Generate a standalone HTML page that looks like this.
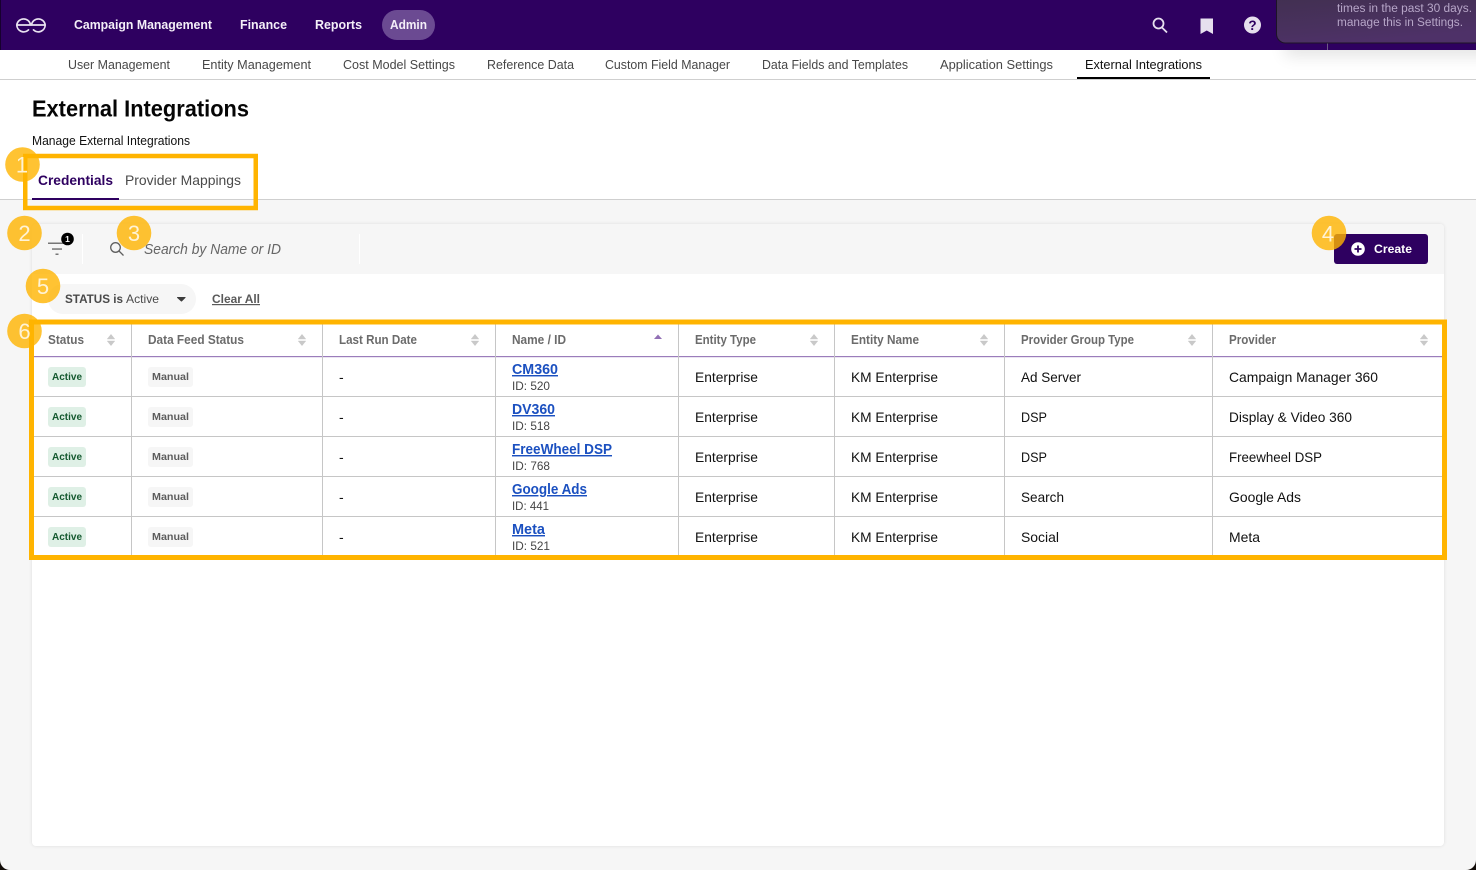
<!DOCTYPE html>
<html lang="en"><head><meta charset="utf-8"><title>External Integrations</title>
<style>
html,body{margin:0;padding:0;width:1476px;height:870px;overflow:hidden;background:#fff}
svg{display:block}
text{font-family:"Liberation Sans",sans-serif;white-space:pre}
.n{font-size:13px;font-weight:700;fill:#f4eff8}
.s{font-size:13px;fill:#474747}
.h{font-size:12.5px;font-weight:700;fill:#6b6b6b}
.c{font-size:14px;fill:#111}
.l{font-size:14.5px;font-weight:700;fill:#1b50c0;text-decoration:underline}
.i{font-size:12px;fill:#444}
.a{font-size:10.5px;font-weight:700;fill:#14592f}
.m{font-size:10.5px;font-weight:700;fill:#5c5c5c}
.b{font-size:22px;fill:#fff3d6;text-anchor:middle}
.si{fill:#c9c9c9}
</style></head><body>
<svg width="1476" height="870" viewBox="0 0 1476 870" xmlns="http://www.w3.org/2000/svg">
<defs>
<linearGradient id="pop" x1="0" y1="0" x2="0.35" y2="1"><stop offset="0" stop-color="#40304e"/><stop offset=".75" stop-color="#4a3160"/><stop offset="1" stop-color="#4e3168"/></linearGradient>
<filter id="blur" x="-20%" y="-100%" width="140%" height="300%"><feGaussianBlur stdDeviation="8"/></filter>
<symbol id="sort" viewBox="0 0 8 12"><path class="si" d="M4 0.300L7.800 5H.2zM4 11.700L.2 7H7.800z" stroke="#c9c9c9" stroke-width=".4" stroke-linejoin="round"/></symbol>
</defs>
<rect width="1476" height="870" fill="#fff"/>
<!-- notification shadow on page -->
<rect x="1285" y="36" width="215" height="20" fill="#000" opacity=".11" filter="url(#blur)"/>
<!-- top bar -->
<rect width="1476" height="50" fill="#2e0060"/>
<rect width="1" height="50" fill="#17002f"/>
<g fill="none" stroke="#e9e2f0" stroke-width="1.700" stroke-linecap="round">
<path d="M16.800 25H30.500A6.900 6.900 0 0 0 16.800 25A6.900 6.900 0 0 0 28.500 29.900"/>
<path d="M45.200 25H31.500A6.900 6.900 0 0 1 45.200 25A6.900 6.900 0 0 1 33.500 29.900"/>
</g>
<text class="n" x="74" y="29" textLength="138" lengthAdjust="spacingAndGlyphs">Campaign Management</text>
<text class="n" x="240" y="29" textLength="47" lengthAdjust="spacingAndGlyphs">Finance</text>
<text class="n" x="315" y="29" textLength="47" lengthAdjust="spacingAndGlyphs">Reports</text>
<rect x="382" y="10" width="53" height="30" rx="15" fill="#6b4a92"/>
<text class="n" x="390" y="29" textLength="37" lengthAdjust="spacingAndGlyphs">Admin</text>
<!-- right icons -->
<g fill="none" stroke="#e6dfee" stroke-width="1.800"><circle cx="1158.500" cy="23.500" r="5"/><path d="M1162 27.500L1167 32.500"/></g>
<path d="M1200.500 18.500h12.500v15.500l-6.250-3.500-6.250 3.500z" fill="#e6dfee"/>
<circle cx="1252.500" cy="25" r="8.500" fill="#e6dfee"/>
<text x="1252.500" y="30" font-size="13.500" font-weight="700" fill="#2e0060" text-anchor="middle">?</text>
<!-- sub nav -->
<text class="s" x="68" y="69" textLength="102" lengthAdjust="spacingAndGlyphs">User Management</text>
<text class="s" x="202" y="69" textLength="109" lengthAdjust="spacingAndGlyphs">Entity Management</text>
<text class="s" x="343" y="69" textLength="112" lengthAdjust="spacingAndGlyphs">Cost Model Settings</text>
<text class="s" x="487" y="69" textLength="87" lengthAdjust="spacingAndGlyphs">Reference Data</text>
<text class="s" x="605" y="69" textLength="125" lengthAdjust="spacingAndGlyphs">Custom Field Manager</text>
<text class="s" x="762" y="69" textLength="146" lengthAdjust="spacingAndGlyphs">Data Fields and Templates</text>
<text class="s" x="940" y="69" textLength="113" lengthAdjust="spacingAndGlyphs">Application Settings</text>
<text class="s" x="1085" y="69" textLength="117" lengthAdjust="spacingAndGlyphs" style="fill:#111">External Integrations</text>
<rect x="0" y="79" width="1476" height="1" fill="#cfcfcf"/>
<rect x="1077" y="77" width="133" height="2" fill="#000"/>
<!-- heading -->
<text x="32" y="116.500" font-size="23" font-weight="700" fill="#050505" textLength="217" lengthAdjust="spacingAndGlyphs">External Integrations</text>
<text x="32" y="145" font-size="12.500" fill="#111" textLength="158" lengthAdjust="spacingAndGlyphs">Manage External Integrations</text>
<!-- body bg -->
<rect x="0" y="200" width="1476" height="670" fill="#f6f6f6"/>
<rect x="0" y="199" width="1476" height="1" fill="#cfcfcf"/>
<!-- tabs -->
<text x="38" y="185" font-size="14" font-weight="700" fill="#2e0060" textLength="75" lengthAdjust="spacingAndGlyphs">Credentials</text>
<text x="125" y="185" font-size="14" fill="#4a4a4a" textLength="116" lengthAdjust="spacingAndGlyphs">Provider Mappings</text>
<rect x="32" y="198" width="87" height="2" fill="#2e0060"/>
<rect x="25.250" y="156" width="230.500" height="52" fill="none" stroke="#ffb400" stroke-width="4.500"/>
<!-- card -->
<rect x="32" y="224" width="1412" height="622" rx="4" fill="#fff" style="filter:drop-shadow(0 0 1.500px rgba(0,0,0,.1))"/>
<path d="M32 274V228a4 4 0 0 1 4-4H1440a4 4 0 0 1 4 4V274z" fill="#f6f6f6"/>
<rect x="82" y="234" width="1" height="30" fill="#fff"/>
<rect x="359" y="234" width="1" height="30" fill="#fff"/>
<!-- filter icon -->
<g fill="#777"><rect x="48" y="242.500" width="16" height="1.500"/><rect x="52" y="248.300" width="10" height="1.500"/><rect x="55.500" y="253.500" width="3" height="1.500"/></g>
<circle cx="67.500" cy="239" r="6.300" fill="#000"/>
<text x="67.500" y="242.200" font-size="8.500" font-weight="700" fill="#fff" text-anchor="middle">1</text>
<!-- search -->
<g fill="none" stroke="#5f5f5f" stroke-width="1.300"><circle cx="115.500" cy="247.500" r="4.800"/><path d="M119 251L123.500 255.500"/></g>
<text x="144" y="254" font-size="14.500" font-style="italic" fill="#666" textLength="137" lengthAdjust="spacingAndGlyphs">Search by Name or ID</text>
<!-- create -->
<rect x="1334" y="234" width="94" height="30" rx="3" fill="#2e0060"/>
<circle cx="1358" cy="249" r="6.800" fill="#fff"/>
<path d="M1354.500 249h7M1358 245.500v7" stroke="#2e0060" stroke-width="1.800"/>
<text x="1374" y="253" font-size="12" font-weight="700" fill="#fff" textLength="38" lengthAdjust="spacingAndGlyphs">Create</text>
<!-- chip -->
<rect x="48" y="284" width="148" height="30" rx="15" fill="#f6f6f6"/>
<text x="65" y="303" font-size="12" font-weight="700" fill="#4a4a4a" textLength="58" lengthAdjust="spacingAndGlyphs">STATUS is</text>
<text x="126" y="303" font-size="12" fill="#4a4a4a" textLength="33" lengthAdjust="spacingAndGlyphs">Active</text>
<path d="M177.500 297h7.600c.500 0 .700.500.300.900l-3.400 3.400a.800.800 0 0 1-1.100 0l-3.700-3.400c-.400-.400-.200-.900.300-.900z" fill="#3c3c3c"/>
<text x="212" y="303" font-size="12" font-weight="700" fill="#5a5a5a" textLength="48" lengthAdjust="spacingAndGlyphs" text-decoration="underline">Clear All</text>
<!-- table -->
<rect x="34" y="324" width="1408" height="231" fill="#fff"/>
<rect x="34" y="356" width="1408" height="1.200" fill="#9b7dbb"/>
<g fill="#c6c6c6">
<rect x="34" y="396" width="1408" height="1"/><rect x="34" y="436" width="1408" height="1"/><rect x="34" y="476" width="1408" height="1"/><rect x="34" y="516" width="1408" height="1"/>
<rect x="131" y="324" width="1" height="231"/><rect x="322" y="324" width="1" height="231"/><rect x="495" y="324" width="1" height="231"/><rect x="678" y="324" width="1" height="231"/><rect x="834" y="324" width="1" height="231"/><rect x="1004" y="324" width="1" height="231"/><rect x="1212" y="324" width="1" height="231"/>
</g>
<text class="h" x="48" y="344" textLength="36" lengthAdjust="spacingAndGlyphs">Status</text>
<text class="h" x="148" y="344" textLength="96" lengthAdjust="spacingAndGlyphs">Data Feed Status</text>
<text class="h" x="339" y="344" textLength="78" lengthAdjust="spacingAndGlyphs">Last Run Date</text>
<text class="h" x="512" y="344" textLength="54" lengthAdjust="spacingAndGlyphs">Name / ID</text>
<text class="h" x="695" y="344" textLength="61" lengthAdjust="spacingAndGlyphs">Entity Type</text>
<text class="h" x="851" y="344" textLength="68" lengthAdjust="spacingAndGlyphs">Entity Name</text>
<text class="h" x="1021" y="344" textLength="113" lengthAdjust="spacingAndGlyphs">Provider Group Type</text>
<text class="h" x="1229" y="344" textLength="47" lengthAdjust="spacingAndGlyphs">Provider</text>
<use href="#sort" x="107" y="334" width="8" height="12"/>
<use href="#sort" x="298" y="334" width="8" height="12"/>
<use href="#sort" x="471" y="334" width="8" height="12"/>
<use href="#sort" x="810" y="334" width="8" height="12"/>
<use href="#sort" x="980" y="334" width="8" height="12"/>
<use href="#sort" x="1188" y="334" width="8" height="12"/>
<use href="#sort" x="1420" y="334" width="8" height="12"/>
<path d="M658 334.500L662 339H654z" fill="#9270b5"/>
<!-- row 1 -->
<g>
<rect x="48" y="367" width="38" height="20" rx="3" fill="#dff0e6"/><text class="a" x="52" y="380" textLength="30" lengthAdjust="spacingAndGlyphs">Active</text>
<rect x="148" y="367" width="45" height="20" rx="3" fill="#f6f6f6"/><text class="m" x="152" y="380" textLength="37" lengthAdjust="spacingAndGlyphs">Manual</text>
<text class="c" x="339" y="382">-</text>
<text class="l" x="512" y="374" textLength="46" lengthAdjust="spacingAndGlyphs">CM360</text>
<text class="i" x="512" y="390" textLength="38" lengthAdjust="spacingAndGlyphs">ID: 520</text>
<text class="c" x="695" y="382" textLength="63" lengthAdjust="spacingAndGlyphs">Enterprise</text>
<text class="c" x="851" y="382" textLength="87" lengthAdjust="spacingAndGlyphs">KM Enterprise</text>
<text class="c" x="1021" y="382" textLength="60" lengthAdjust="spacingAndGlyphs">Ad Server</text>
<text class="c" x="1229" y="382" textLength="149" lengthAdjust="spacingAndGlyphs">Campaign Manager 360</text>
</g>
<!-- row 2 -->
<g>
<rect x="48" y="407" width="38" height="20" rx="3" fill="#dff0e6"/><text class="a" x="52" y="420" textLength="30" lengthAdjust="spacingAndGlyphs">Active</text>
<rect x="148" y="407" width="45" height="20" rx="3" fill="#f6f6f6"/><text class="m" x="152" y="420" textLength="37" lengthAdjust="spacingAndGlyphs">Manual</text>
<text class="c" x="339" y="422">-</text>
<text class="l" x="512" y="414" textLength="43" lengthAdjust="spacingAndGlyphs">DV360</text>
<text class="i" x="512" y="430" textLength="38" lengthAdjust="spacingAndGlyphs">ID: 518</text>
<text class="c" x="695" y="422" textLength="63" lengthAdjust="spacingAndGlyphs">Enterprise</text>
<text class="c" x="851" y="422" textLength="87" lengthAdjust="spacingAndGlyphs">KM Enterprise</text>
<text class="c" x="1021" y="422" textLength="26" lengthAdjust="spacingAndGlyphs">DSP</text>
<text class="c" x="1229" y="422" textLength="123" lengthAdjust="spacingAndGlyphs">Display &amp; Video 360</text>
</g>
<!-- row 3 -->
<g>
<rect x="48" y="447" width="38" height="20" rx="3" fill="#dff0e6"/><text class="a" x="52" y="460" textLength="30" lengthAdjust="spacingAndGlyphs">Active</text>
<rect x="148" y="447" width="45" height="20" rx="3" fill="#f6f6f6"/><text class="m" x="152" y="460" textLength="37" lengthAdjust="spacingAndGlyphs">Manual</text>
<text class="c" x="339" y="462">-</text>
<text class="l" x="512" y="454" textLength="100" lengthAdjust="spacingAndGlyphs">FreeWheel DSP</text>
<text class="i" x="512" y="470" textLength="38" lengthAdjust="spacingAndGlyphs">ID: 768</text>
<text class="c" x="695" y="462" textLength="63" lengthAdjust="spacingAndGlyphs">Enterprise</text>
<text class="c" x="851" y="462" textLength="87" lengthAdjust="spacingAndGlyphs">KM Enterprise</text>
<text class="c" x="1021" y="462" textLength="26" lengthAdjust="spacingAndGlyphs">DSP</text>
<text class="c" x="1229" y="462" textLength="93" lengthAdjust="spacingAndGlyphs">Freewheel DSP</text>
</g>
<!-- row 4 -->
<g>
<rect x="48" y="487" width="38" height="20" rx="3" fill="#dff0e6"/><text class="a" x="52" y="500" textLength="30" lengthAdjust="spacingAndGlyphs">Active</text>
<rect x="148" y="487" width="45" height="20" rx="3" fill="#f6f6f6"/><text class="m" x="152" y="500" textLength="37" lengthAdjust="spacingAndGlyphs">Manual</text>
<text class="c" x="339" y="502">-</text>
<text class="l" x="512" y="494" textLength="75" lengthAdjust="spacingAndGlyphs">Google Ads</text>
<text class="i" x="512" y="510" textLength="37" lengthAdjust="spacingAndGlyphs">ID: 441</text>
<text class="c" x="695" y="502" textLength="63" lengthAdjust="spacingAndGlyphs">Enterprise</text>
<text class="c" x="851" y="502" textLength="87" lengthAdjust="spacingAndGlyphs">KM Enterprise</text>
<text class="c" x="1021" y="502" textLength="43" lengthAdjust="spacingAndGlyphs">Search</text>
<text class="c" x="1229" y="502" textLength="72" lengthAdjust="spacingAndGlyphs">Google Ads</text>
</g>
<!-- row 5 -->
<g>
<rect x="48" y="527" width="38" height="20" rx="3" fill="#dff0e6"/><text class="a" x="52" y="540" textLength="30" lengthAdjust="spacingAndGlyphs">Active</text>
<rect x="148" y="527" width="45" height="20" rx="3" fill="#f6f6f6"/><text class="m" x="152" y="540" textLength="37" lengthAdjust="spacingAndGlyphs">Manual</text>
<text class="c" x="339" y="542">-</text>
<text class="l" x="512" y="534" textLength="33" lengthAdjust="spacingAndGlyphs">Meta</text>
<text class="i" x="512" y="550" textLength="38" lengthAdjust="spacingAndGlyphs">ID: 521</text>
<text class="c" x="695" y="542" textLength="63" lengthAdjust="spacingAndGlyphs">Enterprise</text>
<text class="c" x="851" y="542" textLength="87" lengthAdjust="spacingAndGlyphs">KM Enterprise</text>
<text class="c" x="1021" y="542" textLength="38" lengthAdjust="spacingAndGlyphs">Social</text>
<text class="c" x="1229" y="542" textLength="31" lengthAdjust="spacingAndGlyphs">Meta</text>
</g>
<rect x="31.500" y="322" width="1413" height="235.500" fill="none" stroke="#ffb400" stroke-width="5"/>
<!-- notification -->
<rect x="1327" y="43" width="1" height="7" fill="#6d5a86"/>
<rect x="1276.500" y="-10" width="210" height="53" rx="9" fill="url(#pop)" stroke="#1d1426" stroke-width="1"/>
<text x="1337" y="12" font-size="11.500" fill="#b7a6c8" textLength="135" lengthAdjust="spacingAndGlyphs">times in the past 30 days.</text>
<text x="1337" y="26" font-size="11.500" fill="#b7a6c8" textLength="126" lengthAdjust="spacingAndGlyphs">manage this in Settings.</text>
<!-- numbered badges -->
<g fill="#ffb400" fill-opacity=".8">
<circle cx="22.500" cy="164.500" r="17.300"/><circle cx="24.500" cy="233" r="17.300"/><circle cx="134" cy="233" r="17.300"/><circle cx="1329" cy="233" r="17.300"/><circle cx="43" cy="286" r="17.300"/><circle cx="24.500" cy="331" r="17.300"/>
</g>
<text class="b" x="22" y="172.500">1</text>
<text class="b" x="24.500" y="241">2</text>
<text class="b" x="134" y="241">3</text>
<text class="b" x="1328" y="241.500">4</text>
<text class="b" x="43" y="294">5</text>
<text class="b" x="24.500" y="339">6</text>
<!-- window corners -->
<path d="M0 860V870H10A10 10 0 0 1 0 860z" fill="#120c08"/>
<path d="M1476 860V870H1466A10 10 0 0 0 1476 860z" fill="#120c08"/>
</svg>
</body></html>
